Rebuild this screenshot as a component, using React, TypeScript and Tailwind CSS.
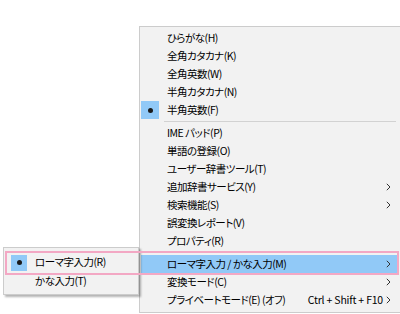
import React from 'react';

type Item =
  | { sep: true }
  | { label: string; checked?: boolean; sub?: boolean; hot?: boolean; shortcut?: string; sep?: false };

const mainItems: Item[] = [
  { label: 'ひらがな(H)' },
  { label: '全角カタカナ(K)' },
  { label: '全角英数(W)' },
  { label: '半角カタカナ(N)' },
  { label: '半角英数(F)', checked: true },
  { sep: true },
  { label: 'IME パッド(P)' },
  { label: '単語の登録(O)' },
  { label: 'ユーザー辞書ツール(T)' },
  { label: '追加辞書サービス(Y)', sub: true },
  { label: '検索機能(S)', sub: true },
  { label: '誤変換レポート(V)' },
  { label: 'プロパティ(R)' },
  { sep: true },
  { label: 'ローマ字入力 / かな入力(M)', sub: true, hot: true },
  { label: '変換モード(C)', sub: true },
  { label: 'プライベートモード(E) (オフ)', sub: true, shortcut: 'Ctrl + Shift + F10' },
];

function Chevron() {
  return (
    <svg width="5" height="8" viewBox="0 0 5 8" className="text-[#333]">
      <path d="M0.8 0.8 L4 4 L0.8 7.2" fill="none" stroke="currentColor" strokeWidth="1" />
    </svg>
  );
}

function CheckBox({ on }: { on?: boolean }) {
  return (
    <div
      className={`w-[18px] h-[18px] flex items-center justify-center ${on ? 'bg-[#91c9f7]' : ''}`}
    >
      {on && <div className="w-[5px] h-[5px] rounded-full bg-[#1a1a1a]" />}
    </div>
  );
}

function MenuRow({ item }: { item: Item }) {
  if (item.sep) {
    return (
      <div className="h-[5px] flex items-center pl-[23px] pr-[1px]">
        <div className="h-px w-full bg-[#d2d2d2]" />
      </div>
    );
  }
  return (
    <div className={`flex items-center h-[18px] ${item.hot ? 'bg-[#91c9f7]' : ''}`}>
      <CheckBox on={item.checked} />
      <span className="ml-[8px] flex-1 whitespace-nowrap">{item.label}</span>
      {item.shortcut && (
        <span className="mr-[3px] whitespace-nowrap tracking-[-0.2px]">{item.shortcut}</span>
      )}
      <div className="w-[11px] flex justify-start">{item.sub && <Chevron />}</div>
    </div>
  );
}

export default function App() {
  return (
    <div className="relative w-[400px] h-[314px] bg-white overflow-hidden text-[10.5px] tracking-[-0.5px] leading-none text-black font-['Noto_Sans_CJK_JP',sans-serif] [font-feature-settings:'palt']">
      {/* main context menu */}
      <div className="absolute left-[139px] top-[26px] w-[262px] border border-[#cccccc] bg-[#f2f2f2] pt-[2px] pb-[3px] pl-[1px] pr-[3px]">
        {mainItems.map((item, i) => (
          <MenuRow key={i} item={item} />
        ))}
      </div>

      {/* input mode submenu */}
      <div className="absolute left-[3px] top-[247px] w-[136px] border border-[#cccccc] bg-[#f2f2f2] pt-[5px] pb-[3px] pl-[7px] shadow-[2px_2px_2px_rgba(0,0,0,0.3)]">
        <div className="flex items-center h-[19px]">
          <div className="w-[16px] h-[16px] flex items-center justify-center bg-[#91c9f7]">
            <div className="w-[5px] h-[5px] rounded-full bg-[#1a1a1a]" />
          </div>
          <span className="ml-[8px] whitespace-nowrap">ローマ字入力(R)</span>
        </div>
        <div className="flex items-center h-[19px]">
          <div className="w-[16px]" />
          <span className="ml-[8px] whitespace-nowrap">かな入力(T)</span>
        </div>
      </div>

      {/* pink annotation */}
      <div className="absolute left-[5px] top-[251px] w-[394px] h-[24px] border-2 border-[#f3a8c4]" />
    </div>
  );
}
